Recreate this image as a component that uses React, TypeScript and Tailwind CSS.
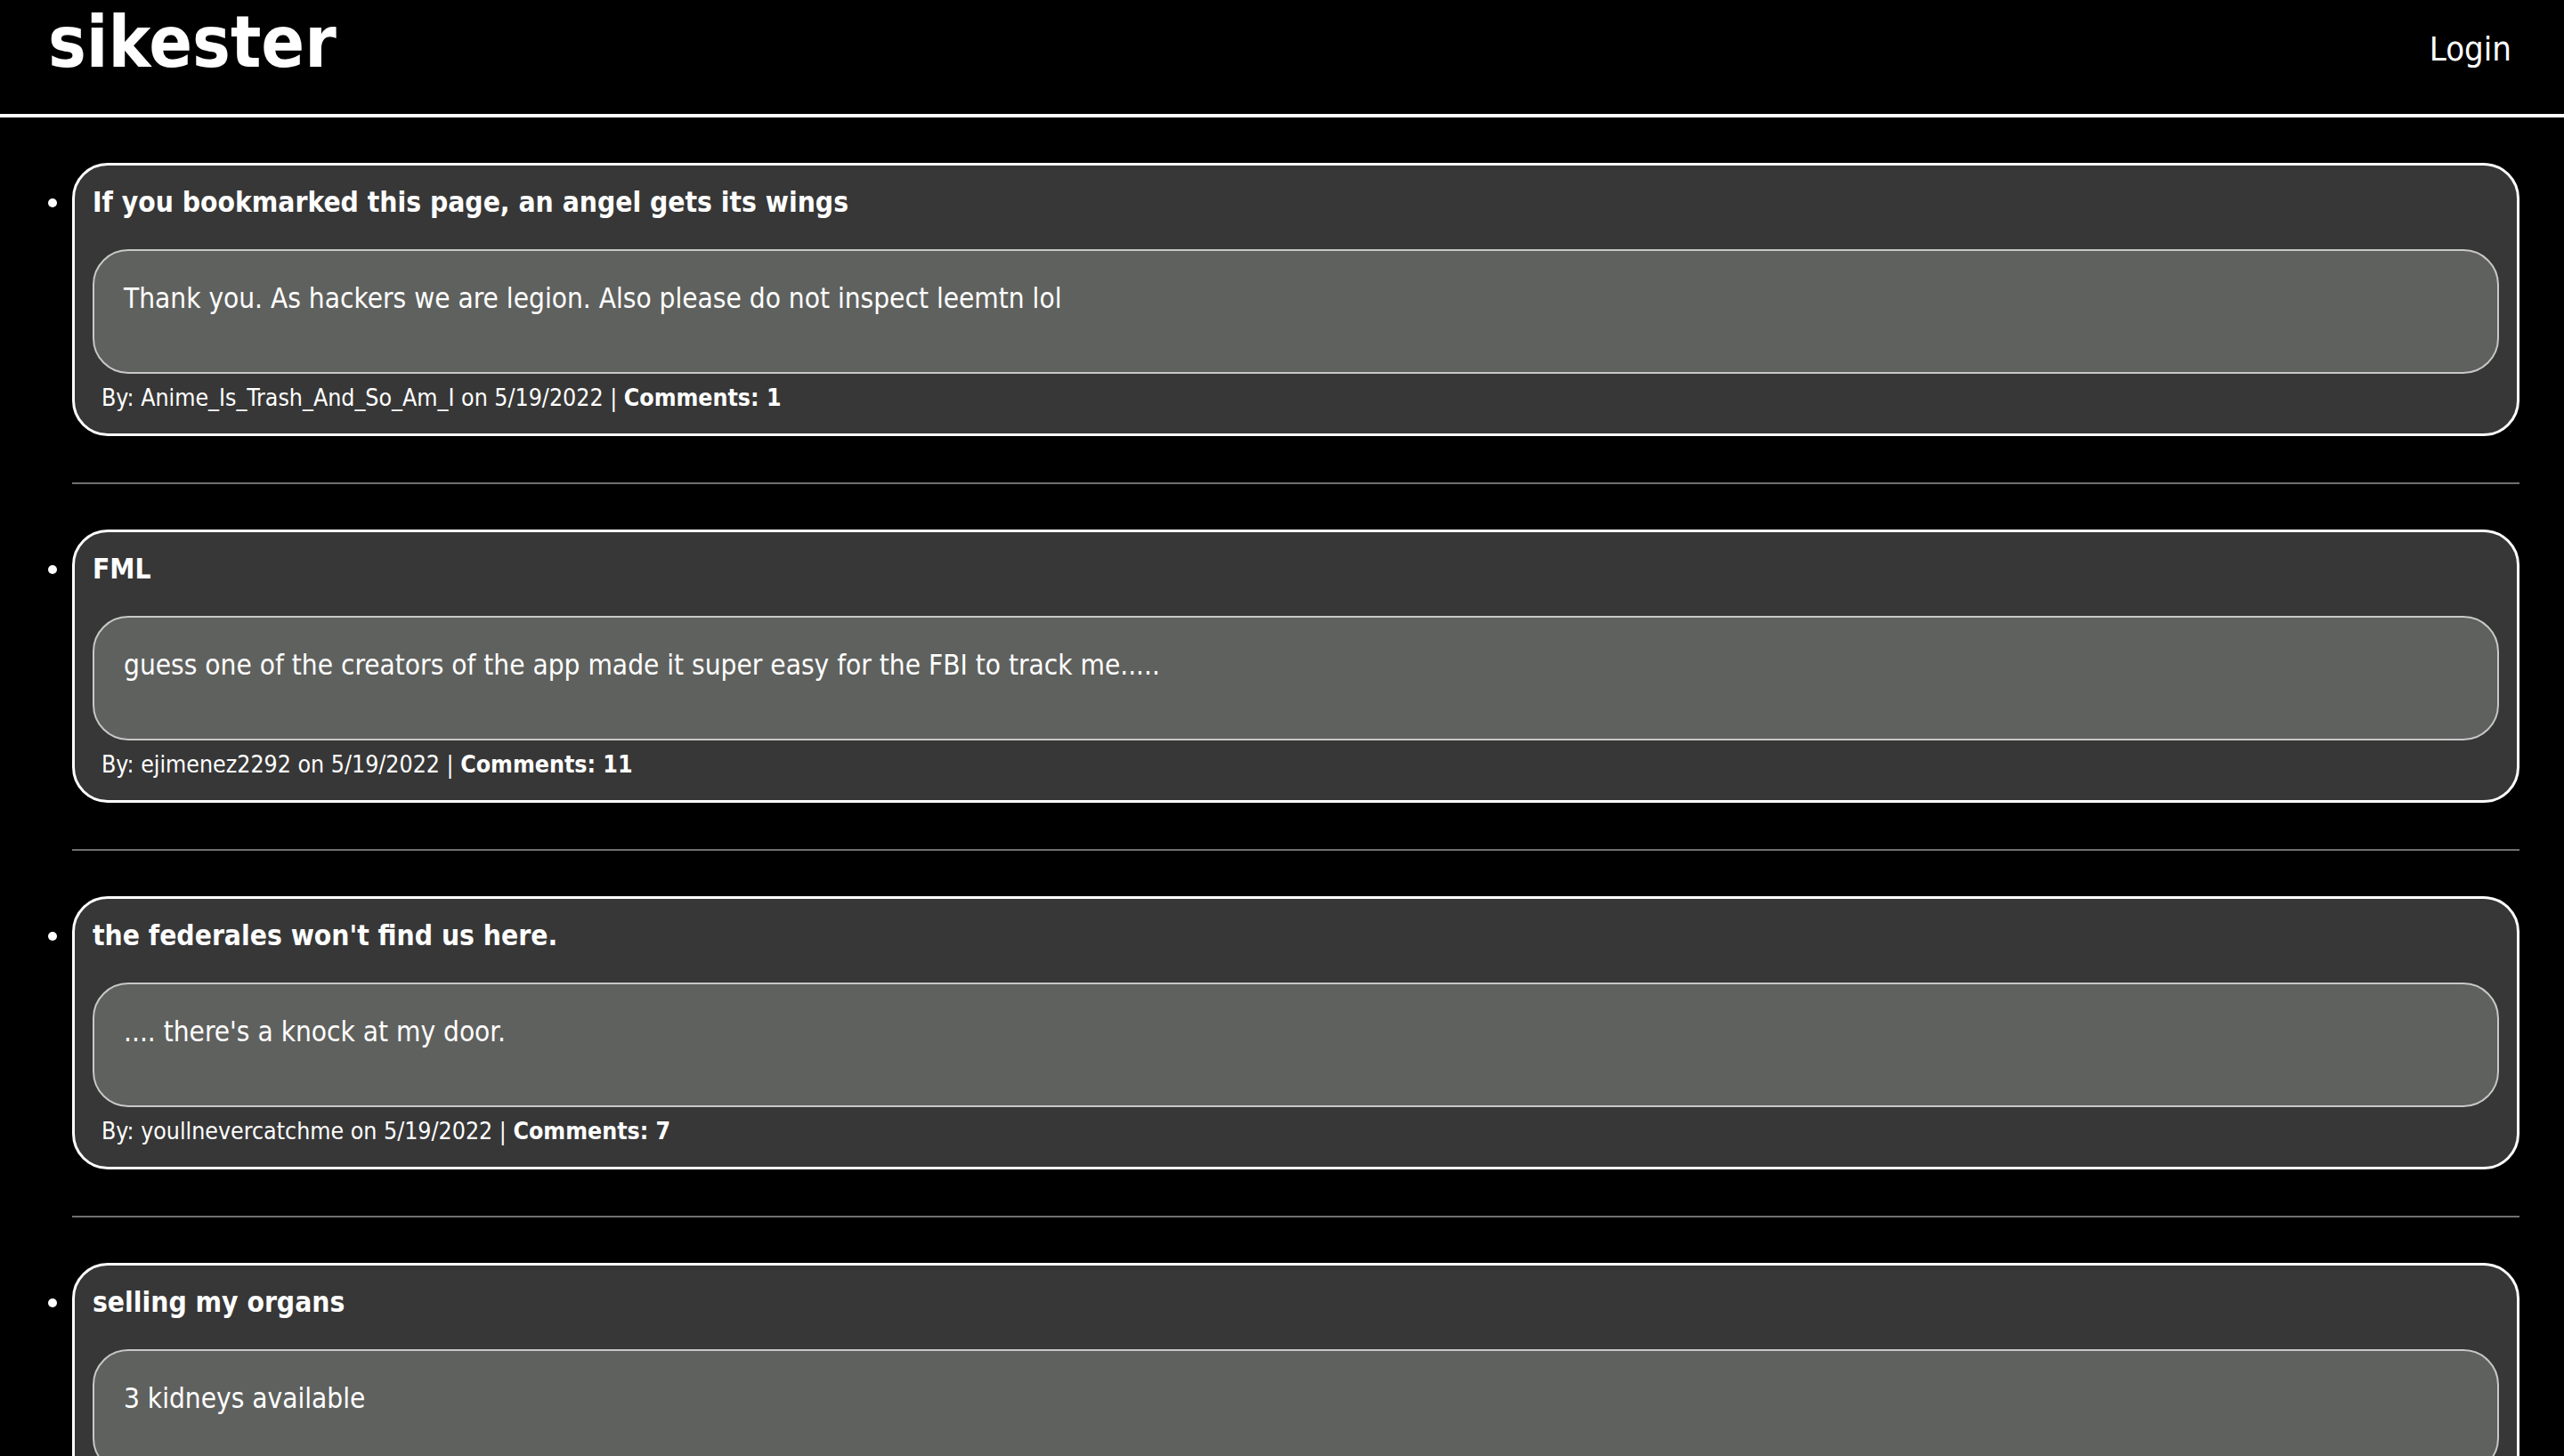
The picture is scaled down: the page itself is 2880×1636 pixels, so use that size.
const posts = [
  {
    title: 'If you bookmarked this page, an angel gets its wings',
    body: 'Thank you. As hackers we are legion. Also please do not inspect leemtn lol',
    author: 'Anime_Is_Trash_And_So_Am_I',
    date: '5/19/2022',
    comments: 1,
  },
  {
    title: 'FML',
    body: 'guess one of the creators of the app made it super easy for the FBI to track me.....',
    author: 'ejimenez2292',
    date: '5/19/2022',
    comments: 11,
  },
  {
    title: "the federales won't find us here.",
    body: ".... there's a knock at my door.",
    author: 'youllnevercatchme',
    date: '5/19/2022',
    comments: 7,
  },
  {
    title: 'selling my organs',
    body: '3 kidneys available',
    author: 'organdonor',
    date: '5/19/2022',
    comments: 3,
  },
];

export default function App() {
  return (
    <div className="min-h-screen bg-black text-white font-['DejaVu_Sans_Condensed','DejaVu_Sans',sans-serif]">
      {/* Top bar */}
      <header className="h-[132px] flex justify-between items-start border-b-4 border-white">
        <h1 className="pl-[54px] pt-[1px] text-[80px] leading-[93px] font-bold">sikester</h1>
        <a href="#" className="pr-[59px] pt-[33px] text-[38px] leading-[44px]">Login</a>
      </header>

      {/* Posts */}
      <ul className="list-disc pl-[81px] pr-[50px] pt-[51px] text-[32px]">
        {posts.map((p) => (
          <li key={p.title}>
            <div className="bg-[#373737] border-[3px] border-white rounded-[40px] px-[20px] pt-[22px] pb-[25px]">
              <div className="font-bold text-[31.5px] leading-[37px] pt-[1px]">{p.title}</div>
              <div className="mt-[34px] bg-[#5f615e] border-2 border-[#c8c8c8] rounded-[40px] px-[33px] pt-[35px] pb-[64px]">
                <p className="text-[31.3px] leading-[37px]">{p.body}</p>
              </div>
              <div className="mt-[12px] pl-[10px] text-[26.5px] leading-[30px]">
                By: {p.author} on {p.date} | <span className="font-bold">Comments: {p.comments}</span>
              </div>
            </div>
            <hr className="mt-[52px] mb-[51px] border-t-2 border-[#707070]" />
          </li>
        ))}
      </ul>
    </div>
  );
}
